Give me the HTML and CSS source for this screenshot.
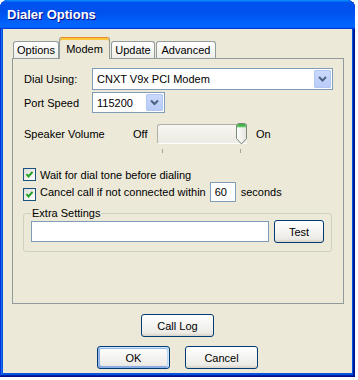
FILE: index.html
```html
<!DOCTYPE html>
<html lang="en">
<head>
  <meta charset="UTF-8">
  <title>Dialer Options</title>
  <link rel="stylesheet" href="styles.css">
</head>
<body>
  <div class="window">
    <div class="titlebar">Dialer Options</div>
    <div class="client">
      <div class="tabs">
        <div class="tab tab-options">Options</div>
        <div class="tab tab-modem active">Modem</div>
        <div class="tab tab-update">Update</div>
        <div class="tab tab-advanced">Advanced</div>
      </div>

      <div class="panel">
        <div class="field-row">
          <span class="field-label">Dial Using:</span>
          <div class="combo combo-wide">
            <span class="combo-text">CNXT V9x PCI Modem</span>
            <span class="combo-btn"><svg width="17" height="18" viewBox="0 0 17 18"><polyline points="5,7 8.5,10.5 12,7" fill="none" stroke="#4d6185" stroke-width="2"/></svg></span>
          </div>
        </div>
        <div class="field-row port-row">
          <span class="field-label">Port Speed</span>
          <div class="combo combo-port">
            <span class="combo-text">115200</span>
            <span class="combo-btn"><svg width="17" height="17" viewBox="0 0 17 17"><polyline points="5,6.5 8.5,10 12,6.5" fill="none" stroke="#4d6185" stroke-width="2"/></svg></span>
          </div>
        </div>

        <div class="volume-row">
          <span class="volume-label">Speaker Volume</span>
          <span class="volume-off">Off</span>
          <div class="slider">
            <div class="slider-track"></div>
            <svg class="slider-thumb" width="11" height="22" viewBox="0 0 11 22">
              <defs>
                <linearGradient id="thumbBody" x1="0" y1="0" x2="1" y2="0">
                  <stop offset="0" stop-color="#ffffff"/>
                  <stop offset="1" stop-color="#e4e3dc"/>
                </linearGradient>
              </defs>
              <path d="M0.5,3 Q0.5,0.5 3,0.5 H8 Q10.5,0.5 10.5,3 V15.5 L5.5,21 L0.5,15.5 Z" fill="url(#thumbBody)" stroke="#7b8a77"/>
              <path d="M1,3 Q1,1 3,1 H8 Q10,1 10,3 V4 H1 Z" fill="#3fb34a"/>
              <path d="M1,4 H10" stroke="#8fd98f" stroke-width="1"/>
            </svg>
          </div>
          <span class="volume-on">On</span>
        </div>
        <div class="ticks"><span class="tick"></span><span class="tick"></span></div>

        <div class="check-row">
          <span class="checkbox"><svg width="11" height="11" viewBox="0 0 11 11"><path d="M2.5,5 L4.5,7.5 L8.5,2.8" fill="none" stroke="#21a121" stroke-width="2"/></svg></span>
          <span>Wait for dial tone before dialing</span>
        </div>
        <div class="check-row check-row-timeout">
          <span class="checkbox"><svg width="11" height="11" viewBox="0 0 11 11"><path d="M2.5,5 L4.5,7.5 L8.5,2.8" fill="none" stroke="#21a121" stroke-width="2"/></svg></span>
          <span>Cancel call if not connected within</span>
          <span class="textbox textbox-seconds">60</span>
          <span class="seconds">seconds</span>
        </div>

        <fieldset class="group">
          <legend>Extra Settings</legend>
          <div class="group-row">
            <span class="textbox textbox-extra"></span>
            <button class="btn btn-test">Test</button>
          </div>
        </fieldset>
      </div>

      <div class="actions">
        <button class="btn">Call Log</button>
        <div class="action-row">
          <button class="btn btn-default">OK</button>
          <button class="btn">Cancel</button>
        </div>
      </div>
    </div>
  </div>
</body>
</html>
```

FILE: styles.css
```css
body {
  margin: 0;
  background: #ffffff;
  font-family: "Liberation Sans", Arial, sans-serif;
  font-size: 11px;
  color: #000000;
}

/* window frame */
.window {
  width: 355px;
  height: 377px;
  box-sizing: border-box;
  padding: 0 3px 4px 3px;
  display: flex;
  flex-direction: column;
  background: #0855dd;
  border-radius: 8px 8px 0 0;
  box-shadow: inset -1px -1px #00138c, inset 1px 1px #0831d9, inset -2px -2px #001ea0, inset 2px 2px #166aee;
}
.titlebar {
  flex: none;
  height: 29px;
  margin: 0 -3px;
  padding-left: 7px;
  display: flex;
  align-items: center;
  border-radius: 8px 8px 0 0;
  background: linear-gradient(180deg, #0997ff, #0053ee 8%, #0050ee 40%, #0066ff 88%, #0066ff 93%, #005bff 95%, #003dd7 96%, #003dd7);
  color: #ffffff;
  font-size: 13px;
  font-weight: bold;
  text-shadow: 1px 1px #0f1089;
}
.client {
  flex: 1;
  background: #ece9d8;
  padding-top: 8px;
  display: flex;
  flex-direction: column;
}

/* tabs */
.tabs {
  height: 21px;
  margin-left: 10px;
  display: flex;
  align-items: flex-end;
}
.tab {
  height: 17px;
  box-sizing: border-box;
  display: flex;
  align-items: center;
  justify-content: center;
  border: 1px solid #919b9c;
  border-bottom: none;
  border-radius: 3px 3px 0 0;
  background: linear-gradient(180deg, #ffffff, #fafaf9 26%, #f0f0ea 95%, #ecebe5);
}
.tab-options { width: 46px; }
.tab-modem { width: 51px; }
.tab-update { width: 44px; margin-left: 1px; }
.tab-advanced { width: 60px; margin-left: 1px; }
.tab.active {
  height: 22px;
  margin-bottom: -1px;
  position: relative;
  z-index: 1;
  border-top: 1px solid #e68b2c;
  box-shadow: inset 0 2px #ffc73c;
  background: #ece9d8;
  padding-top: 1px;
}

/* tab page */
.panel {
  height: 246px;
  box-sizing: border-box;
  margin: 0 8px 0 9px;
  padding: 9px 10px 0 11px;
  border: 1px solid #919b9c;
  background: #ece9d8;
}
.field-row {
  display: flex;
  align-items: center;
}
.port-row { margin-top: 2px; }
.field-label { width: 68px; }
.combo {
  height: 22px;
  box-sizing: border-box;
  display: flex;
  align-items: center;
  padding: 0 1px 0 4px;
  border: 1px solid #7f9db9;
  background: #ffffff;
}
.combo-wide { width: 241px; }
.combo-port { width: 73px; height: 21px; }
.combo-text { flex: 1; }
.combo-btn {
  display: flex;
  border-radius: 2px;
  background: linear-gradient(180deg, #cbdafc, #b7cbf7);
  box-shadow: inset 0 0 0 1px #b2c6f4;
}

/* volume slider */
.volume-row {
  margin-top: 10px;
  height: 22px;
  display: flex;
  align-items: center;
}
.volume-label { width: 109px; }
.volume-off { width: 24px; }
.slider {
  width: 90px;
  height: 22px;
  position: relative;
}
.slider-track {
  margin-top: 1px;
  height: 20px;
  box-sizing: border-box;
  border: 1px solid #b3b1a6;
  border-right: none;
  border-bottom-color: #ffffff;
  border-radius: 3px 0 0 3px;
  background: linear-gradient(180deg, #f7f6f2, #eceae2);
}
.slider-thumb {
  position: absolute;
  right: 0;
  top: 0;
}
.volume-on { margin-left: 9px; }
.ticks {
  margin: 4px 0 0 138px;
  height: 4px;
  display: flex;
  gap: 77px;
}
.tick {
  width: 1px;
  height: 4px;
  background: #a4a39a;
}

/* checkboxes */
.check-row {
  margin-top: 15px;
  height: 13px;
  display: flex;
  align-items: center;
  margin-left: -1px;
}
.check-row-timeout {
  margin-top: 1px;
  height: 20px;
}
.check-row-timeout .checkbox {
  align-self: flex-start;
  margin-top: 6px;
}
.checkbox {
  width: 13px;
  height: 13px;
  box-sizing: border-box;
  margin-right: 4px;
  display: flex;
  align-items: center;
  justify-content: center;
  border: 1px solid #1c5180;
  background: linear-gradient(135deg, #dcdcd7, #ffffff);
}
.textbox {
  box-sizing: border-box;
  border: 1px solid #7f9db9;
  background: #ffffff;
  display: flex;
  align-items: center;
  padding-left: 4px;
}
.textbox-seconds {
  width: 26px;
  height: 20px;
  margin-left: 4px;
}
.seconds { margin-left: 5px; }

/* extra settings group */
.group {
  width: 309px;
  box-sizing: border-box;
  margin: 5px 0 0 -1px;
  padding: 0 7px 8px 7px;
  border: 1px solid #d0d0bf;
  border-radius: 3px;
}
.group legend {
  padding: 0 1px;
  line-height: 13px;
}
.group-row {
  display: flex;
  align-items: center;
}
.textbox-extra {
  width: 238px;
  height: 21px;
}

/* buttons */
.btn {
  width: 73px;
  height: 23px;
  padding: 0;
  font-family: "Liberation Sans", Arial, sans-serif;
  font-size: 11px;
  color: #000000;
  border: 1px solid #003c74;
  border-radius: 3px;
  background: linear-gradient(180deg, #ffffff, #ecebe6 86%, #d6d0c5);
}
.btn-default {
  box-shadow: inset -1px 1px #cee7ff, inset 1px 2px #98b8ea, inset -2px 2px #bcd4f6, inset 1px -1px #89ade4, inset 2px -2px #89ade4;
}
.btn-test {
  margin-left: 5px;
  width: 50px;
}
.actions {
  margin-top: 10px;
  display: flex;
  flex-direction: column;
  align-items: center;
  gap: 9px;
}
.action-row {
  display: flex;
  gap: 15px;
}
```
